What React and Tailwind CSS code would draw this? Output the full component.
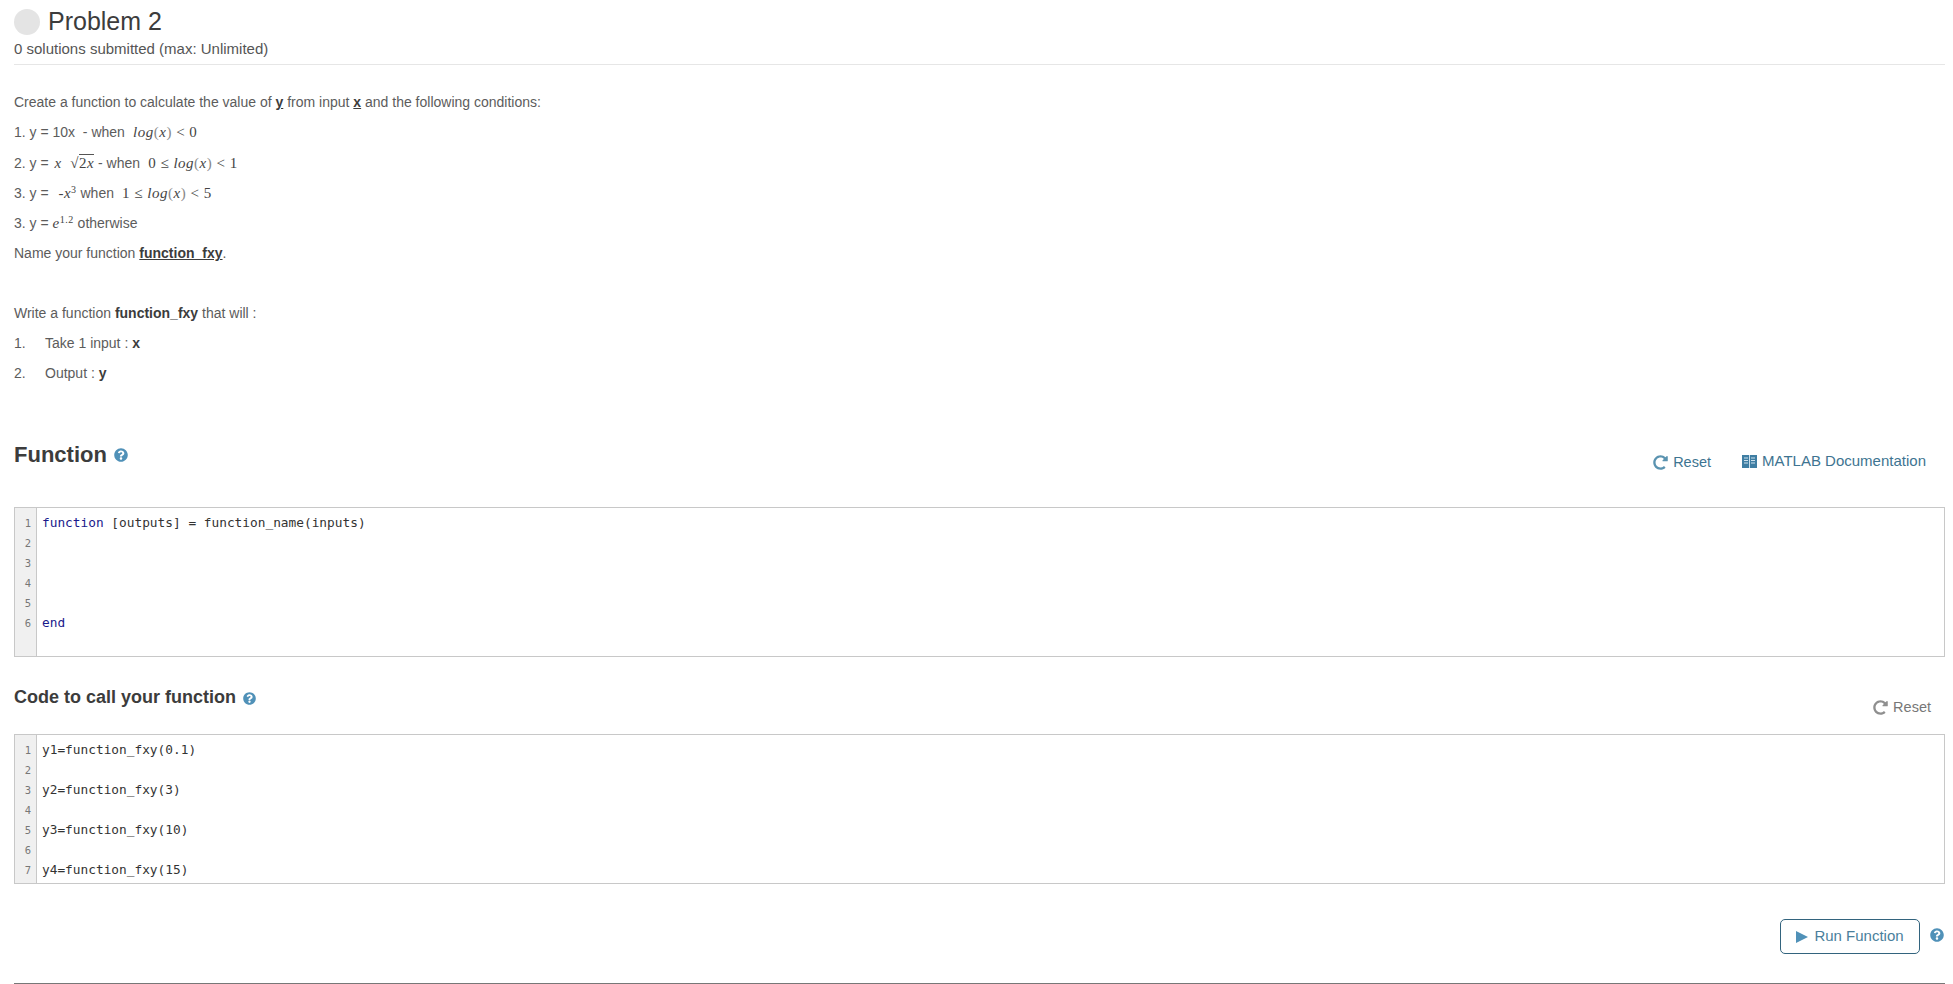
import { FaQuestionCircle, FaRedoAlt } from 'react-icons/fa';

const Math = ({ children }) => (
  <span className="font-['Liberation_Serif',serif] text-[15px] tracking-[0.5px] text-[#444]">{children}</span>
);

const Log = () => (
  <>
    <i>log</i><span className="text-[#888]">(</span><i>x</i><span className="text-[#888]">)</span>
  </>
);

const Line = ({ children, className = '' }) => (
  <p className={`h-[30px] leading-[30px] whitespace-pre ${className}`}>{children}</p>
);

function CodeBox({ lines, height }) {
  return (
    <div className={`flex ${height} border border-[#c8c8c8] font-['DejaVu_Sans_Mono',monospace] text-[12.8px] leading-[20px]`}>
      <div className="w-[22px] shrink-0 bg-[#f0f0f0] border-r border-[#c8c8c8] pt-[5px] pr-[5px] text-right text-[10.5px] text-[#777]">
        {lines.map((_, i) => <div key={i} className="h-[20px]">{i + 1}</div>)}
      </div>
      <div className="pt-[5px] pl-[5px] text-[#333] whitespace-pre">
        {lines.map((l, i) => <div key={i} className="h-[20px]">{l}</div>)}
      </div>
    </div>
  );
}

const Help = ({ size = 14, className = '' }) => <FaQuestionCircle size={size} className={`text-[#5091b8] ${className}`} />;

const Kw = ({ children }) => <span className="text-[#1a1a8c]">{children}</span>;

export default function App() {
  return (
    <div className="w-[1953px] h-[984px] overflow-hidden bg-white pl-[14px] pr-[8px] font-['Liberation_Sans',sans-serif] text-[#5c5c5c]">
      {/* Header */}
      <div className="h-[65px] border-b border-[#e6e6e6]">
        <div className="flex items-center h-[42px] pt-[2px]">
          <div className="w-[26px] h-[26px] rounded-full bg-[#e4e4e4] mr-[8px]" />
          <h1 className="text-[25px] text-[#3c3c3c]">Problem 2</h1>
        </div>
        <p className="text-[15px] leading-[14px] text-[#555]">0 solutions submitted (max: Unlimited)</p>
      </div>

      {/* Description */}
      <div className="mt-[22px] text-[14px]">
        <Line>Create a function to calculate the value of <b className="underline text-[#3c3c3c]">y</b> from input <b className="underline text-[#3c3c3c]">x</b> and the following conditions:</Line>
        <Line>1. y = 10x  - when <Math> <Log /> &lt; 0</Math></Line>
        <Line className="mt-[1px]">2. y = <Math><i className="ml-[2px]">x</i>  √<span className="border-t border-[#555]">2<i>x</i></span></Math> - when <Math> 0 ≤ <Log /> &lt; 1</Math></Line>
        <Line>3. y =  <Math><span className="ml-[2px]">-</span><i>x</i><sup className="text-[10px]">3</sup></Math> when <Math> 1 ≤ <Log /> &lt; 5</Math></Line>
        <Line>3. y = <Math><i>e</i><sup className="text-[10px]">1.2</sup></Math> otherwise</Line>
        <Line>Name your function <b className="underline text-[#3c3c3c]">function_fxy</b>.</Line>
        <Line> </Line>
        <Line>Write a function <b className="text-[#3c3c3c]">function_fxy</b> that will :</Line>
        <Line className="flex"><span className="w-[31px]">1.</span><span>Take 1 input : <b className="text-[#3c3c3c]">x</b></span></Line>
        <Line className="flex"><span className="w-[31px]">2.</span><span>Output : <b className="text-[#3c3c3c]">y</b></span></Line>
      </div>

      {/* Function */}
      <div className="flex justify-between items-start mt-[51px] h-[68px]">
        <div className="flex items-center gap-[7px]">
          <h2 className="text-[22px] leading-[32px] font-bold text-[#3c3c3c]">Function</h2>
          <Help size={14} />
        </div>
        <div className="flex text-[15px] text-[#3e7491] pr-[19px] pt-[12px]">
          <span className="flex items-center gap-[5px] mt-[1px] mr-[31px] text-[14.5px]"><FaRedoAlt size={15} className="text-[#5a93b0]" />Reset</span>
          <span className="flex items-center gap-[5px] h-[20px]">
            <svg width="15" height="13" viewBox="0 0 15 13">
              <rect width="15" height="13" fill="#3f7ea3" />
              <path d="M7.5 0v13M2 3h4M2 5.5h4M2 8h4M9 3h4M9 5.5h4M9 8h4" stroke="#cfe2ee" strokeWidth="1" />
            </svg>
            MATLAB Documentation
          </span>
        </div>
      </div>
      <CodeBox
        height="h-[150px]"
        lines={[
          <><Kw>function</Kw> [outputs] = function_name(inputs)</>,
          '', '', '', '',
          <Kw>end</Kw>,
        ]}
      />

      {/* Code to call */}
      <div className="flex justify-between items-start mt-[27px] h-[50px]">
        <div className="flex items-center gap-[7px]">
          <h3 className="text-[18px] leading-[27px] font-bold text-[#3c3c3c]">Code to call your function</h3>
          <Help size={13} className="mt-[2px]" />
        </div>
        <span className="flex items-center gap-[5px] text-[14.5px] text-[#777] pr-[14px] pt-[13px]">
          <FaRedoAlt size={15} className="text-[#8f8f8f]" />Reset
        </span>
      </div>
      <CodeBox
        height="h-[150px]"
        lines={['y1=function_fxy(0.1)', '', 'y2=function_fxy(3)', '', 'y3=function_fxy(10)', '', 'y4=function_fxy(15)']}
      />

      {/* Run */}
      <div className="flex justify-end items-center gap-[10px] mt-[35px] pr-[1px]">
        <button className="flex items-center justify-center gap-[6px] w-[140px] h-[35px] rounded-[5px] border border-[#33647e] bg-white text-[15px] text-[#4a7f9c]">
          <svg width="12" height="12" viewBox="0 0 12 12"><path d="M0 0l12 6-12 6z" fill="#5091b8" /></svg>
          Run Function
        </button>
        <Help size={14} className="-mt-[4px]" />
      </div>
      <div className="mt-[29px] border-t border-[#777]" />
    </div>
  );
}
